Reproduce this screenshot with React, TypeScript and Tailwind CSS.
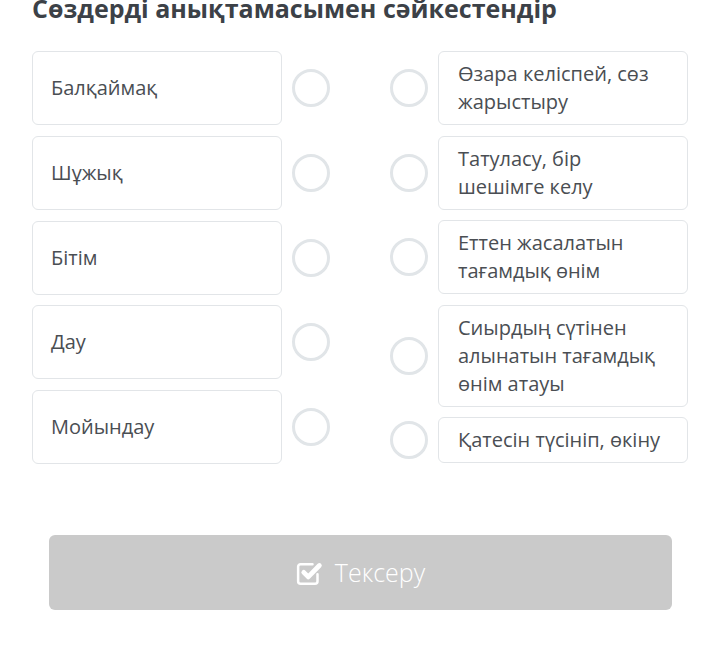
import React from "react";

const left = ["Балқаймақ", "Шұжық", "Бітім", "Дау", "Мойындау"];
const right = [
  "Өзара келіспей, сөз жарыстыру",
  "Татуласу, бір шешімге келу",
  "Еттен жасалатын тағамдық өнім",
  "Сиырдың сүтінен алынатын тағамдық өнім атауы",
  "Қатесін түсініп, өкіну",
];

function Dot() {
  return <span className="block w-[38px] h-[38px] shrink-0 rounded-full border-[3px] border-[#e1e5e8] bg-white" />;
}

function CheckIcon() {
  return (
    <svg width="30" height="30" viewBox="0 0 24 24" fill="none" stroke="white" strokeLinecap="round" strokeLinejoin="round">
      <path d="M18 13v5.5a2 2 0 0 1-2 2H4.5a2 2 0 0 1-2-2V7a2 2 0 0 1 2-2H14" strokeWidth="2" />
      <path d="M7 11.5l3.6 3.6L19.5 6" strokeWidth="3.8" />
    </svg>
  );
}

export default function App() {
  return (
    <div className="w-[720px] h-[657px] overflow-hidden bg-white font-['Open_Sans',sans-serif]">
      <h1 className="mt-[-10px] pl-[32px] text-[25px] leading-[36px] font-bold text-[#3c4147]">
        Сөздерді анықтамасымен сәйкестендір
      </h1>

      <div className="mt-[25px] px-[32px] flex justify-between">
        <div className="flex flex-col gap-[10.75px]">
          {left.map((t) => (
            <div key={t} className="flex items-center gap-[10px]">
              <div className="w-[250px] h-[74px] flex items-center px-[18px] border border-[#e2e5e8] rounded-[6px] text-[20px] text-[#4a4e53]">
                {t}
              </div>
              <Dot />
            </div>
          ))}
        </div>

        <div className="flex flex-col gap-[10.5px]">
          {right.map((t) => (
            <div key={t} className="flex items-center gap-[10px]">
              <Dot />
              <div className="w-[250px] py-[8px] px-[19px] border border-[#e2e5e8] rounded-[6px] text-[20px] leading-[28px] text-[#4a4e53]">
                {t}
              </div>
            </div>
          ))}
        </div>
      </div>

      <button
        type="button"
        className="mt-[71px] mx-auto w-[623px] h-[75px] flex items-center justify-center gap-[10px] rounded-[6px] bg-[#cacaca] text-white text-[25px] font-light"
      >
        <CheckIcon />
        <span>Тексеру</span>
      </button>
    </div>
  );
}
